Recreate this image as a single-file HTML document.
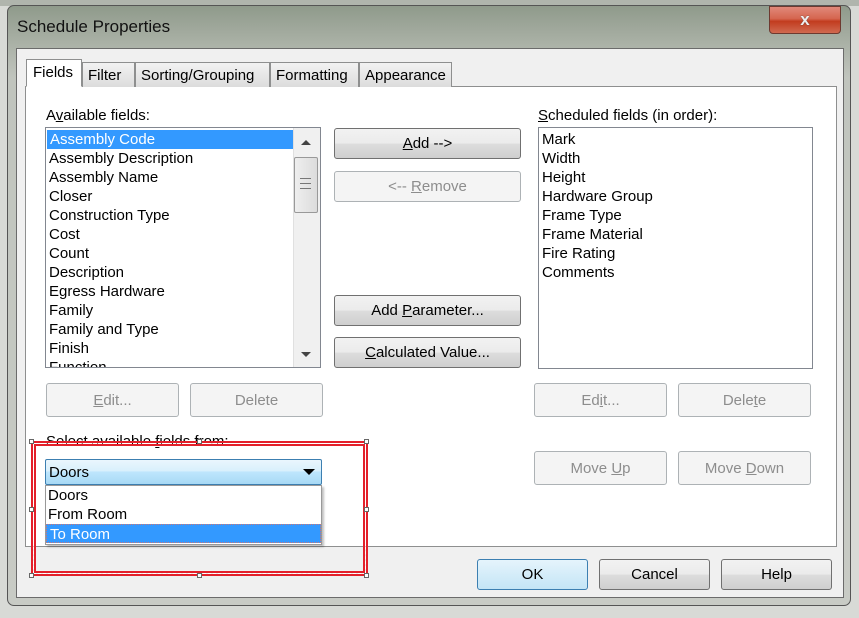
<!DOCTYPE html>
<html><head><meta charset="utf-8"><style>
*{box-sizing:border-box;margin:0;padding:0}
body{width:859px;height:618px;overflow:hidden;position:relative;font-family:"Liberation Sans",sans-serif;font-size:15px;color:#000;background:#d8dad6}
.a{position:absolute}
.frame{left:7px;top:5px;width:844px;height:601px;border:1px solid #555;border-radius:7px;background:linear-gradient(180deg,#8f9a8b 0%,#a9b0a5 6%,#c0c4bd 12%,#c8cbc5 100%)}
.client{left:16px;top:48px;width:828px;height:550px;background:#f0f0f0;border:1px solid #6b6b6b}
.panel{left:25px;top:86px;width:812px;height:461px;background:#fff;border:1px solid #8e8f8f}
.tab{top:62px;height:25px;border:1px solid #8e8f8f;border-bottom:none;background:linear-gradient(#f2f2f2,#dcdcdc);padding:4px 5px 0;font-size:15px}
.btn{height:31px;border:1px solid #707070;border-radius:3px;background:linear-gradient(#f2f2f2 0%,#ebebeb 50%,#dddddd 51%,#cfcfcf 100%);text-align:center;line-height:30px}
.dis{border-color:#adb2b5;background:#f4f4f4;color:#8d8d8d}
.list{background:#fff;border:1px solid #828790;overflow:hidden}
.list div{height:19px;line-height:20px;padding-left:3px;white-space:nowrap}
.sel{background:#3399ff;color:#fff}
u{text-decoration:underline}
.h{position:absolute;width:5px;height:5px;background:#fff;border:1px solid #666}
</style></head><body>
<div class="a" style="left:0;top:0;width:859px;height:6px;background:#b0b5ad"></div>
<div class="a frame"></div>
<div class="a" style="left:17px;top:17px;font-size:17px;color:#111">Schedule Properties</div>
<div class="a" style="left:769px;top:6px;width:72px;height:28px;border:1px solid #6d3a30;border-radius:0 0 4px 4px;background:linear-gradient(#e0887a 0%,#d5654f 45%,#c23c1f 55%,#d06a50 100%);color:#eee;font-weight:bold;font-size:17px;text-align:center;line-height:26px;text-shadow:0 0 1px #333">x</div>
<div class="a client"></div>
<div class="a panel"></div>
<div class="a tab" style="left:82px;width:53px">Filter</div>
<div class="a tab" style="left:135px;width:135px">Sorting/Grouping</div>
<div class="a tab" style="left:270px;width:89px">Formatting</div>
<div class="a tab" style="left:359px;width:93px">Appearance</div>
<div class="a tab" style="left:26px;top:59px;height:28px;width:56px;background:#fff;border-bottom:1px solid #fff;padding-left:6px">Fields</div>

<div class="a" style="left:46px;top:107px">A<u>v</u>ailable fields:</div>
<div class="a list" style="left:45px;top:127px;width:276px;height:241px">
<div class="sel" style="width:246px;margin:2px 0 0 1px">Assembly Code</div>
<div>Assembly Description</div><div>Assembly Name</div><div>Closer</div><div>Construction Type</div><div>Cost</div><div>Count</div><div>Description</div><div>Egress Hardware</div><div>Family</div><div>Family and Type</div><div>Finish</div><div>Function</div>
</div>
<div class="a" style="left:293px;top:128px;width:27px;height:239px;background:#f0f0f0;border-left:1px solid #e0e0e0"></div>
<div class="a" style="left:301px;top:140px;width:0;height:0;border-left:5px solid transparent;border-right:5px solid transparent;border-bottom:5px solid #444"></div>
<div class="a" style="left:301px;top:352px;width:0;height:0;border-left:5px solid transparent;border-right:5px solid transparent;border-top:5px solid #444"></div>
<div class="a" style="left:294px;top:157px;width:24px;height:56px;border:1px solid #999;border-radius:2px;background:linear-gradient(90deg,#eee,#dcdcdc)"></div>
<div class="a" style="left:300px;top:178px;width:11px;height:11px;border-top:1px solid #777;border-bottom:1px solid #777"><div style="margin-top:4px;border-top:1px solid #777"></div></div>

<div class="a btn" style="left:334px;top:128px;width:187px"><u>A</u>dd --&gt;</div>
<div class="a btn dis" style="left:334px;top:171px;width:187px">&lt;-- <u>R</u>emove</div>
<div class="a btn" style="left:334px;top:295px;width:187px">Add <u>P</u>arameter...</div>
<div class="a btn" style="left:334px;top:337px;width:187px"><u>C</u>alculated Value...</div>

<div class="a" style="left:538px;top:107px"><u>S</u>cheduled fields (in order):</div>
<div class="a list" style="left:538px;top:127px;width:275px;height:242px;padding-top:2px">
<div>Mark</div><div>Width</div><div>Height</div><div>Hardware Group</div><div>Frame Type</div><div>Frame Material</div><div>Fire Rating</div><div>Comments</div>
</div>

<div class="a btn dis" style="left:46px;top:383px;width:133px;height:34px;line-height:33px"><u>E</u>dit...</div>
<div class="a btn dis" style="left:190px;top:383px;width:133px;height:34px;line-height:33px">Delete</div>
<div class="a btn dis" style="left:534px;top:383px;width:133px;height:34px;line-height:33px">Ed<u>i</u>t...</div>
<div class="a btn dis" style="left:678px;top:383px;width:133px;height:34px;line-height:33px">Dele<u>t</u>e</div>
<div class="a btn dis" style="left:534px;top:451px;width:133px;height:34px;line-height:33px">Move <u>U</u>p</div>
<div class="a btn dis" style="left:678px;top:451px;width:133px;height:34px;line-height:33px">Move <u>D</u>own</div>

<div class="a" style="left:46px;top:433px">Select available <u>f</u>ields from:</div>
<div class="a" style="left:45px;top:459px;width:277px;height:26px;border:1px solid #3c7fb1;border-radius:2px;background:linear-gradient(#eaf6fd 0%,#d9f0fc 45%,#bee6fd 50%,#a7d9f5 100%);padding:3px 0 0 3px;line-height:20px">Doors</div>
<div class="a" style="left:303px;top:469px;width:0;height:0;border-left:6px solid transparent;border-right:6px solid transparent;border-top:6px solid #000"></div>
<div class="a list" style="left:45px;top:485px;width:277px;height:60px;border-color:#999;box-shadow:2px 2px 2px rgba(0,0,0,.25)">
<div style="padding-left:2px">Doors</div><div style="padding-left:2px">From Room</div><div class="sel" style="border:1px dotted #c77">To Room</div>
</div>

<div class="a" style="left:31px;top:441px;width:337px;height:135px;border:2px solid #e3202a"></div>
<div class="a" style="left:33px;top:443px;width:333px;height:131px;border:1px dashed #fff"></div>
<div class="a" style="left:34px;top:444px;width:331px;height:129px;border:2px solid #e3202a"></div>
<div class="h" style="left:29px;top:439px"></div><div class="h" style="left:197px;top:439px"></div><div class="h" style="left:364px;top:439px"></div>
<div class="h" style="left:29px;top:507px"></div><div class="h" style="left:364px;top:507px"></div>
<div class="h" style="left:29px;top:573px"></div><div class="h" style="left:197px;top:573px"></div><div class="h" style="left:364px;top:573px"></div>

<div class="a btn" style="left:477px;top:559px;width:111px;height:31px;border-color:#3c7fb1;background:linear-gradient(#e5f4fc,#c4e5f6)">OK</div>
<div class="a btn" style="left:599px;top:559px;width:111px;height:31px">Cancel</div>
<div class="a btn" style="left:721px;top:559px;width:111px;height:31px">Help</div>
</body></html>
